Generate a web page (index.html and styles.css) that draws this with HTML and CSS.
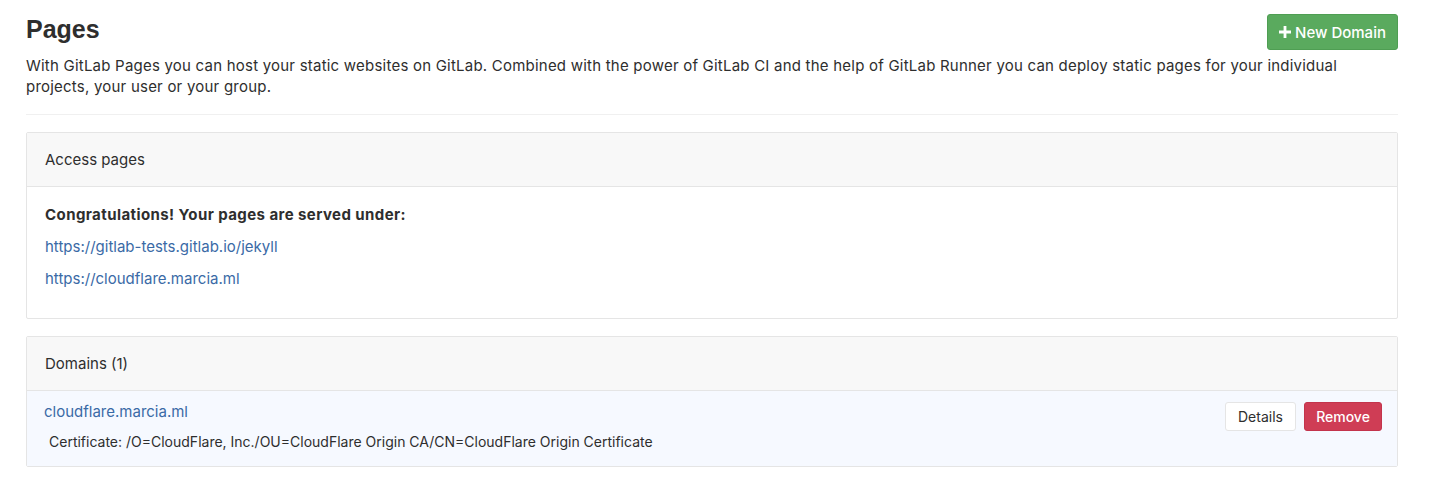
FILE: index.html
```html
<!DOCTYPE html>
<html>
<head>
<meta charset="utf-8">
<link rel="stylesheet" href="styles.css">
</head>
<body>
<div class="page">
  <div class="top">
    <h1 class="title">Pages</h1>
    <a class="btn btn-new"><svg class="plus" viewBox="0 0 12 12" width="12" height="12"><path d="M4.6 0h2.8v4.6H12v2.8H7.4V12H4.6V7.4H0V4.6h4.6z" fill="#fff"/></svg>New Domain</a>
  </div>
  <p class="lead">With GitLab Pages you can host your static websites on GitLab. Combined with the power of GitLab CI and the help of GitLab Runner you can deploy static pages for your individual projects, your user or your group.</p>
  <hr class="sep">
  <div class="panel">
    <div class="panel-head">Access pages</div>
    <div class="panel-body">
      <p class="strong">Congratulations! Your pages are served under:</p>
      <p><a class="link">https://gitlab-tests.gitlab.io/jekyll</a></p>
      <p><a class="link">https://cloudflare.marcia.ml</a></p>
    </div>
  </div>
  <div class="panel panel-domains">
    <div class="panel-head">Domains (1)</div>
    <div class="domain-row">
      <div class="domain-info">
        <a class="link domain">cloudflare.marcia.ml</a>
        <div class="cert">Certificate: /O=CloudFlare, Inc./OU=CloudFlare Origin CA/CN=CloudFlare Origin Certificate</div>
      </div>
      <div class="actions">
        <a class="btn btn-details">Details</a>
        <a class="btn btn-remove">Remove</a>
      </div>
    </div>
  </div>
</div>
</body>
</html>
```
FILE: styles.css
```css
* { box-sizing: border-box; }
body {
  margin: 0;
  background: #fff;
  font-family: Inter, "Liberation Sans", Arial, sans-serif;
  color: #2e2e2e;
}
.page {
  padding: 0 51px 0 26px;
}
.top {
  display: flex;
  justify-content: space-between;
  align-items: flex-start;
  height: 50px;
}
.title {
  margin: 13px 0 0;
  font-family: "Liberation Sans", Arial, sans-serif;
  font-size: 25px;
  line-height: 32px;
  font-weight: bold;
  color: #2e2e2e;
}
.lead {
  margin: 5px 0 0;
  max-width: 1345px;
  font-size: 15px;
  line-height: 21px;
  letter-spacing: 0.22px;
  color: #2e2e2e;
}
.btn {
  display: inline-flex;
  align-items: center;
  justify-content: center;
  border-radius: 3px;
  font-size: 14px;
  text-decoration: none;
}
.btn-new {
  margin-top: 14px;
  width: 131px;
  height: 36px;
  background: #5aaa5e;
  border: 1px solid #4f9e53;
  color: #fff;
  font-weight: 500;
  font-size: 15px;
  gap: 4px;
  flex: none;
}
.plus { display: block; }
.sep {
  margin: 17px 0 0;
  border: 0;
  border-top: 1px solid #f0f0f0;
  height: 0;
}
.panel {
  margin-top: 17px;
  border: 1px solid #e5e5e5;
  border-radius: 2px;
}
.panel-head {
  height: 54px;
  display: flex;
  align-items: center;
  padding-left: 18px;
  background: #f8f8f8;
  border-bottom: 1px solid #e5e5e5;
  font-size: 15px;
  color: #2e2e2e;
}
.panel-body {
  padding: 17px 18px 18px;
  font-size: 15px;
}
.panel-body p {
  margin: 0 0 11px;
  line-height: 21px;
}
.strong { font-weight: 700; letter-spacing: 0.42px; color: #2e2e2e; }
.link { color: #3a6aa6; text-decoration: none; }
.panel-domains { margin-top: 17px; }
.domain-row {
  display: flex;
  justify-content: space-between;
  background: #f6f9ff;
  padding: 11px 15px 0 17px;
  height: 75px;
}
.domain {
  display: block;
  font-size: 15px;
  line-height: 20px;
}
.cert {
  margin: 10px 0 0 5px;
  font-size: 14px;
  line-height: 20px;
  color: #2e2e2e;
}
.actions {
  display: flex;
  gap: 8px;
  align-self: flex-start;
}
.btn-details {
  height: 29px;
  width: 71px;
  background: #fff;
  border: 1px solid #e5e5e5;
  color: #2e2e2e;
}
.btn-remove {
  height: 29px;
  width: 78px;
  background: #cf3d55;
  border: 1px solid #c3344c;
  color: #fff;
  font-weight: 500;
}
```
